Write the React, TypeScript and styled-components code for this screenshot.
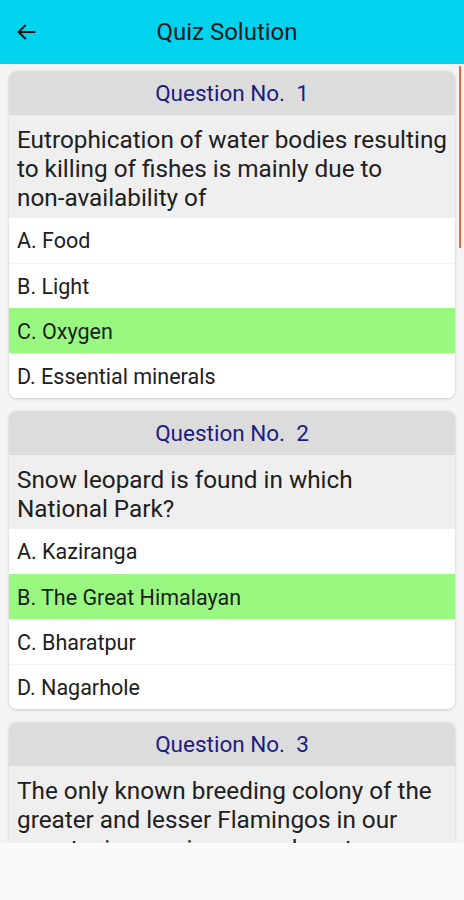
import React from 'react';
import styled, { createGlobalStyle } from 'styled-components';

type Question = {
  id: number;
  text: string;
  options: string[];
  answer: number;
};

// non-breaking hyphen keeps "non-availability" on one line, as on the device
const questions: Question[] = [
  {
    id: 1,
    text: 'Eutrophication of water bodies resulting to killing of fishes is mainly due to non\u2011availability of',
    options: ['Food', 'Light', 'Oxygen', 'Essential minerals'],
    answer: 2
  },
  {
    id: 2,
    text: 'Snow leopard is found in which National Park?',
    options: ['Kaziranga', 'The Great Himalayan', 'Bharatpur', 'Nagarhole'],
    answer: 1
  },
  {
    id: 3,
    text: 'The only known breeding colony of the greater and lesser Flamingos in our country is seen in ______ desert.',
    options: ['Thar', 'Rann of Kutch', 'Ladakh', 'Spiti'],
    answer: 1
  }
];

const letters = ['A', 'B', 'C', 'D'];

const GlobalStyle = createGlobalStyle`
  html, body {
    margin: 0;
    padding: 0;
  }
  body {
    font-family: Roboto, "Noto Sans", "Liberation Sans", sans-serif;
    background: #f4f4f4;
  }
`;

const Screen = styled.div`
  width: 464px;
  height: 900px;
  display: flex;
  flex-direction: column;
  overflow: hidden;
  background: #f4f4f4;
`;

const Toolbar = styled.header`
  height: 64px;
  flex-shrink: 0;
  display: flex;
  align-items: center;
  background: #00d3ee;
  padding: 0 14px;
  box-sizing: border-box;
`;

const BackButton = styled.button`
  width: 24px;
  height: 24px;
  padding: 0;
  border: none;
  background: none;
  display: flex;
  align-items: center;
  justify-content: center;
  color: #111;
`;

const Title = styled.h1`
  flex: 1;
  margin: 0 34px 0 0;
  text-align: center;
  font-size: 24px;
  font-weight: 400;
  color: #1a1a1a;
`;

const ScrollArea = styled.main`
  position: relative;
  flex: 1;
  overflow: hidden;
  padding: 7px 9px 0;
  display: flex;
  flex-direction: column;
  gap: 13px;
`;

const ScrollThumb = styled.div`
  position: absolute;
  right: 3px;
  top: 2px;
  width: 2px;
  height: 182px;
  background: #e8663f;
`;

const Card = styled.section`
  flex-shrink: 0;
  background: #fff;
  border-radius: 8px;
  overflow: hidden;
  box-shadow: 0 1px 3px rgba(0, 0, 0, 0.18);
`;

const CardHeader = styled.div`
  height: 44px;
  display: flex;
  align-items: center;
  justify-content: center;
  background: #dcdcdc;
  color: #1c1c82;
  font-size: 22.5px;
  white-space: pre;
`;

const QuestionText = styled.p`
  margin: 0;
  padding: 10px 8px 6px;
  background: #efefef;
  color: #202020;
  font-size: 24.3px;
  line-height: 29px;
`;

const Options = styled.div`
  display: flex;
  flex-direction: column;
`;

const Option = styled.div<{ $correct?: boolean }>`
  height: 45px;
  display: flex;
  align-items: center;
  padding: 0 8px;
  font-size: 21.5px;
  color: #202020;
  background: ${(p) => (p.$correct ? '#98f880' : '#fff')};
  border-top: 1px solid ${(p) => (p.$correct ? '#98f880' : '#f4f4f4')};
  box-sizing: border-box;

  &:first-child {
    border-top: none;
  }
`;

const BottomBar = styled.footer`
  height: 57px;
  flex-shrink: 0;
  background: #fafafa;
`;

const QuestionCard = ({ q }: { q: Question }) => (
  <Card>
    <CardHeader>{`Question No.  ${q.id}`}</CardHeader>
    <QuestionText>{q.text}</QuestionText>
    <Options>
      {q.options.map((opt, i) => (
        <Option key={opt} $correct={i === q.answer}>
          {letters[i]}. {opt}
        </Option>
      ))}
    </Options>
  </Card>
);

const App = (): JSX.Element => (
  <Screen>
    <GlobalStyle />
    <Toolbar>
      <BackButton aria-label="Back">
        <svg width="22" height="22" viewBox="0 0 24 24" fill="none" stroke="currentColor" strokeWidth="2.2" strokeLinecap="square">
          <path d="M21 12H4" />
          <path d="M11 5l-7 7 7 7" />
        </svg>
      </BackButton>
      <Title>Quiz Solution</Title>
    </Toolbar>
    <ScrollArea>
      {questions.map((q) => (
        <QuestionCard key={q.id} q={q} />
      ))}
      <ScrollThumb />
    </ScrollArea>
    <BottomBar />
  </Screen>
);

export default App;
